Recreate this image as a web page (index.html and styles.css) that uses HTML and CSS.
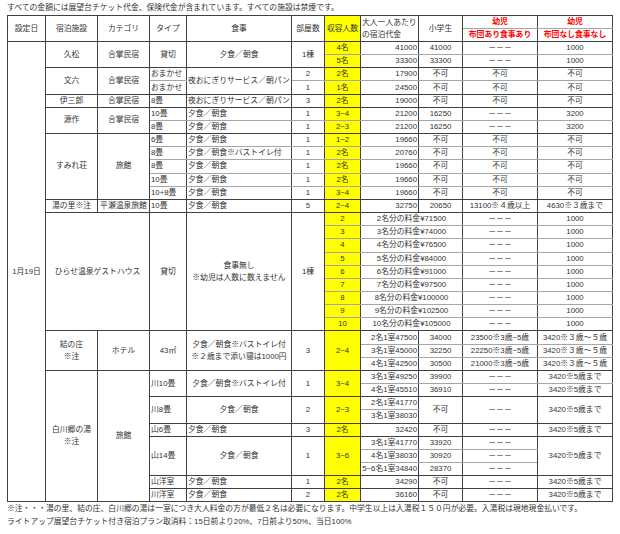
FILE: index.html
```html
<!DOCTYPE html>
<html lang="ja">
<head>
<meta charset="utf-8">
<link rel="stylesheet" href="styles.css">
</head>
<body>
<div class="top">すべての金額には展望台チケット代金、保険代金が含まれています。すべての施設は禁煙です。</div>
<table class="plan">
<colgroup>
<col class="w1"><col class="w2"><col class="w3"><col class="w4"><col class="w5"><col class="w6"><col class="w7"><col class="w8"><col class="w9"><col class="w10"><col class="w11">
</colgroup>
<thead>
<tr class="hr s">
<th rowspan="2">設定日</th><th rowspan="2">宿泊施設</th><th rowspan="2">カテゴリ</th><th rowspan="2">タイプ</th><th rowspan="2">食事</th><th rowspan="2">部屋数</th><th rowspan="2" class="y">収容人数</th><th rowspan="2" class="l">大人一人あたり<br>の宿泊代金</th><th rowspan="2">小学生</th><th class="red">幼児</th><th class="red">幼児</th>
</tr>
<tr class="hr">
<th class="red">布団あり食事あり</th><th class="red">布団なし食事なし</th>
</tr>
</thead>
<tbody>
<tr class="s"><td rowspan="35">1月19日</td><td rowspan="2">久松</td><td rowspan="2">合掌民宿</td><td rowspan="2">貸切</td><td rowspan="2">夕食／朝食</td><td rowspan="2">1棟</td><td class="y">4名</td><td class="r">41000</td><td>41000</td><td>－－－</td><td>1000</td></tr>
<tr><td class="y">5名</td><td class="r">33300</td><td>33300</td><td>－－－</td><td>1000</td></tr>
<tr class="s"><td rowspan="2">文六</td><td rowspan="2">合掌民宿</td><td class="l">おまかせ</td><td rowspan="2" class="l">夜おにぎりサービス／朝パン</td><td>2</td><td class="y">2名</td><td class="r">17900</td><td>不可</td><td>不可</td><td>不可</td></tr>
<tr><td class="l">おまかせ</td><td>1</td><td class="y">1名</td><td class="r">24500</td><td>不可</td><td>不可</td><td>不可</td></tr>
<tr><td>伊三郎</td><td>合掌民宿</td><td class="l">8畳</td><td class="l">夜おにぎりサービス／朝パン</td><td>3</td><td class="y">2名</td><td class="r">19000</td><td>不可</td><td>不可</td><td>不可</td></tr>
<tr class="s"><td rowspan="2">源作</td><td rowspan="2">合掌民宿</td><td class="l">10畳</td><td class="l">夕食／朝食</td><td>1</td><td class="y">3~4</td><td class="r">21200</td><td>16250</td><td>－－－</td><td>3200</td></tr>
<tr><td class="l">8畳</td><td class="l">夕食／朝食</td><td>1</td><td class="y">2~3</td><td class="r">21200</td><td>16250</td><td>－－－</td><td>3200</td></tr>
<tr class="s"><td rowspan="5">すみれ荘</td><td rowspan="5">旅館</td><td class="l">6畳</td><td class="l">夕食／朝食</td><td>1</td><td class="y">1~2</td><td class="r">19660</td><td>不可</td><td>不可</td><td>不可</td></tr>
<tr class="s"><td class="l">8畳</td><td class="l">夕食／朝食※バストイレ付</td><td>1</td><td class="y">2名</td><td class="r">20760</td><td>不可</td><td>不可</td><td>不可</td></tr>
<tr class="s"><td class="l">8畳</td><td class="l">夕食／朝食</td><td>1</td><td class="y">2名</td><td class="r">19660</td><td>不可</td><td>不可</td><td>不可</td></tr>
<tr class="s"><td class="l">10畳</td><td class="l">夕食／朝食</td><td>1</td><td class="y">2名</td><td class="r">19660</td><td>不可</td><td>不可</td><td>不可</td></tr>
<tr><td class="l">10+8畳</td><td class="l">夕食／朝食</td><td>1</td><td class="y">3~4</td><td class="r">19660</td><td>不可</td><td>不可</td><td>不可</td></tr>
<tr><td>湯の里※注</td><td>平瀬温泉旅館</td><td class="l">10畳</td><td class="l">夕食／朝食</td><td>5</td><td class="y">2~4</td><td class="r">32750</td><td>20650</td><td>13100※４歳以上</td><td>4630※３歳まで</td></tr>
<tr class="s"><td rowspan="9" colspan="2">ひらせ温泉ゲストハウス</td><td rowspan="9">貸切</td><td rowspan="9">食事無し<br>※幼児は人数に数えません</td><td rowspan="9">1棟</td><td class="y">2</td><td colspan="2">2名分の料金¥71500</td><td>－－－</td><td>1000</td></tr>
<tr class="s"><td class="y">3</td><td colspan="2">3名分の料金¥74000</td><td>－－－</td><td>1000</td></tr>
<tr class="s"><td class="y">4</td><td colspan="2">4名分の料金¥76500</td><td>－－－</td><td>1000</td></tr>
<tr class="s"><td class="y">5</td><td colspan="2">5名分の料金¥84000</td><td>－－－</td><td>1000</td></tr>
<tr class="s"><td class="y">6</td><td colspan="2">6名分の料金¥91000</td><td>－－－</td><td>1000</td></tr>
<tr class="s"><td class="y">7</td><td colspan="2">7名分の料金¥97500</td><td>－－－</td><td>1000</td></tr>
<tr class="s"><td class="y">8</td><td colspan="2">8名分の料金¥100000</td><td>－－－</td><td>1000</td></tr>
<tr class="s"><td class="y">9</td><td colspan="2">9名分の料金¥102500</td><td>－－－</td><td>1000</td></tr>
<tr><td class="y">10</td><td colspan="2">10名分の料金¥105000</td><td>－－－</td><td>1000</td></tr>
<tr class="s"><td rowspan="3">結の庄<br>※注</td><td rowspan="3">ホテル</td><td rowspan="3">43㎡</td><td rowspan="3">夕食／朝食※バストイレ付<br>※２歳まで添い寝は1000円</td><td rowspan="3">3</td><td rowspan="3" class="y">2~4</td><td class="r">2名1室47500</td><td>34000</td><td>23500※3歳~5歳</td><td>3420※３歳～５歳</td></tr>
<tr class="s"><td class="r">3名1室45000</td><td>32250</td><td>22250※3歳~5歳</td><td>3420※３歳～５歳</td></tr>
<tr><td class="r">4名1室42500</td><td>30500</td><td>21000※3歳~5歳</td><td>3420※３歳～５歳</td></tr>
<tr class="s"><td rowspan="10">白川郷の湯<br>※注</td><td rowspan="10">旅館</td><td rowspan="2" class="l">川10畳</td><td rowspan="2">夕食／朝食※バストイレ付</td><td rowspan="2">1</td><td rowspan="2" class="y">3~4</td><td class="r">3名1室49250</td><td>39900</td><td>－－－</td><td>3420※5歳まで</td></tr>
<tr><td class="r">4名1室45510</td><td>36910</td><td>－－－</td><td>3420※5歳まで</td></tr>
<tr class="s"><td rowspan="2" class="l">川8畳</td><td rowspan="2">夕食／朝食</td><td rowspan="2">2</td><td rowspan="2" class="y">2~3</td><td class="r">2名1室41770</td><td rowspan="2">不可</td><td rowspan="2">－－－</td><td rowspan="2">3420※5歳まで</td></tr>
<tr><td class="r">3名1室38030</td></tr>
<tr><td class="l">山6畳</td><td class="l">夕食／朝食</td><td>3</td><td class="y">2名</td><td class="r">32420</td><td>不可</td><td>－－－</td><td>3420※5歳まで</td></tr>
<tr class="s"><td rowspan="3" class="l">山14畳</td><td rowspan="3">夕食／朝食</td><td rowspan="3">1</td><td rowspan="3" class="y">3~6</td><td class="r">3名1室41770</td><td>33920</td><td>－－－</td><td rowspan="3">3420※5歳まで</td></tr>
<tr class="s"><td class="r">4名1室38030</td><td>30920</td><td>－－－</td></tr>
<tr><td class="r">5~6名1室34840</td><td>28370</td><td>－－－</td></tr>
<tr><td class="l">山洋室</td><td class="l">夕食／朝食</td><td>1</td><td class="y">2名</td><td class="r">34290</td><td>不可</td><td>－－－</td><td>3420※5歳まで</td></tr>
<tr><td class="l">川洋室</td><td class="l">夕食／朝食</td><td>2</td><td class="y">2名</td><td class="r">36160</td><td>不可</td><td>－－－</td><td>3420※5歳まで</td></tr>
</tbody>
</table>
<div class="note">※注・・・湯の里、結の庄、白川郷の湯は一室につき大人料金の方が最低２名は必要になります。中学生以上は入湯税１５０円が必要。入湯税は現地現金払いです。</div>
<div class="note">ライトアップ展望台チケット付き宿泊プラン取消料：15日前より20%、7日前より50%、当日100%</div>
</body>
</html>
```

FILE: styles.css
```css
body {
  margin: 0;
  padding: 0 0 0 7px;
  background: #ffffff;
  color: #333333;
  font-family: "Liberation Sans", "Noto Sans CJK JP", sans-serif;
  font-size: 7.8px;
}
.top {
  height: 15px;
  line-height: 15px;
  white-space: nowrap;
}
.plan {
  border-collapse: collapse;
  table-layout: fixed;
  width: 605px;
  border: 1px solid #333333;
}
.w1 { width: 38px; }
.w2 { width: 52px; }
.w3 { width: 52px; }
.w4 { width: 37px; }
.w5 { width: 105px; }
.w6 { width: 33px; }
.w7 { width: 36px; }
.w8 { width: 58px; }
.w9 { width: 44px; }
.w10 { width: 75px; }
.w11 { width: 75px; }
.plan td, .plan th {
  border: 1px solid #404040;
  padding: 0 1px;
  text-align: center;
  vertical-align: middle;
  white-space: nowrap;
  overflow: hidden;
  line-height: 12px;
  font-weight: normal;
}
.plan .hr { height: 13px; }
.plan tbody tr { height: 13.17px; }
.plan tr.s > td:not([rowspan]),
.plan tr.s > th:not([rowspan]) {
  border-bottom-color: #a6a6a6;
}
.plan .l { text-align: left; }
.plan .r { text-align: right; }
.plan .y { background: #ffff00; }
.plan .red { color: #ff0000; font-weight: bold; }
.note {
  line-height: 13px;
  white-space: nowrap;
}
```
